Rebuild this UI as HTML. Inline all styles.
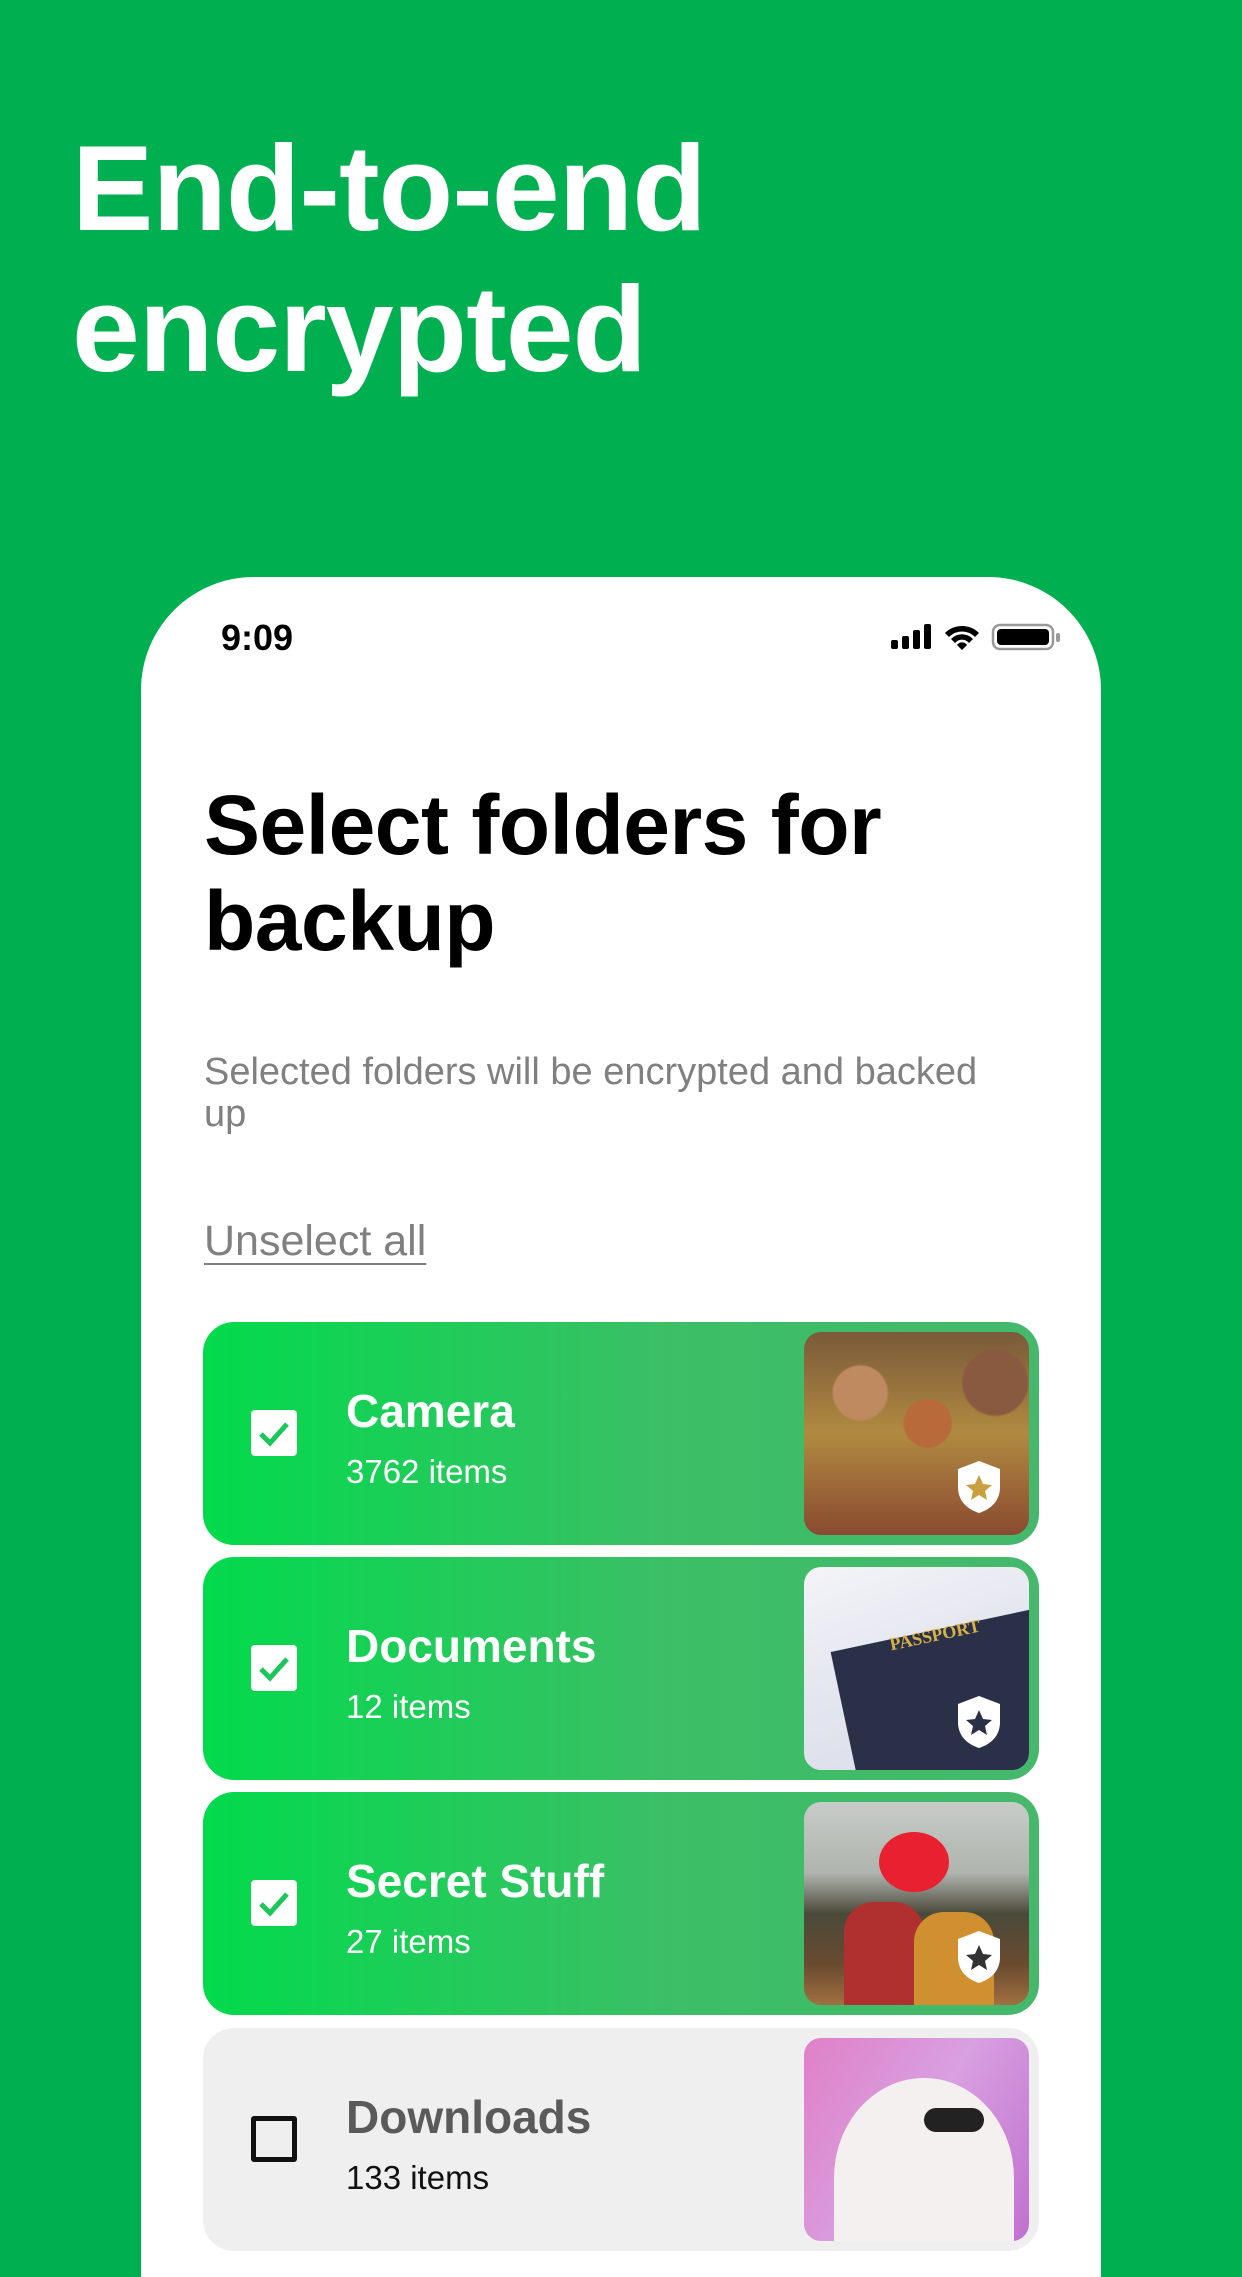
<!DOCTYPE html>
<html><head><meta charset="utf-8">
<style>
*{margin:0;padding:0;box-sizing:border-box}
body{width:1242px;height:2208px;overflow:hidden;background:#00B050;font-family:"Liberation Sans",sans-serif;position:relative}
.h1{position:absolute;left:72px;top:118px;color:#fff;font-size:122px;font-weight:700;line-height:141px;letter-spacing:-1px}
.phone{position:absolute;left:141px;top:577px;width:960px;height:1700px;background:#fff;border-radius:113px 113px 0 0}
.time{position:absolute;left:80px;top:40px;font-size:36px;font-weight:700;color:#000}
.title{position:absolute;left:63px;top:200px;font-size:84px;font-weight:700;line-height:96px;color:#000;letter-spacing:-0.5px}
.sub{position:absolute;left:63px;top:474px;font-size:38px;line-height:42px;color:#808080;width:820px}
.uns{position:absolute;left:63px;top:640px;font-size:43px;color:#808080;text-decoration:underline;text-underline-offset:8px;text-decoration-thickness:2px}
.card{position:absolute;left:62px;width:836px;height:223px;border-radius:31px;background:linear-gradient(90deg,#02DA4C 0%,#3BBF66 55%,#45B86C 100%)}
.card.off{background:#EFEFEF}
.cb{position:absolute;left:48px;top:88px;width:46px;height:46px;background:#fff;border-radius:4px}
.off .cb{background:none;border:5px solid #111;border-radius:3px}
.name{position:absolute;left:143px;top:62px;font-size:46px;font-weight:700;color:#fff}
.cnt{position:absolute;left:143px;top:131px;font-size:33px;color:#fff}
.off .name{color:#5a5a5a}.off .cnt{color:#111}
.img{position:absolute;left:601px;top:10px;width:225px;height:203px;border-radius:17px;overflow:hidden}
.sh{position:absolute;right:26px;bottom:20px;width:48px;height:56px}
</style></head><body>
<div class="h1">End-to-end<br>encrypted</div>
<div class="phone">
 <div class="time">9:09</div>
 <svg style="position:absolute;left:750px;top:45px" width="175" height="30" viewBox="0 0 175 30">
  <rect x="0" y="18" width="7" height="9" rx="2"/><rect x="11" y="14" width="7" height="13" rx="2"/><rect x="22" y="8" width="7" height="19" rx="2"/><rect x="33" y="2" width="7" height="25" rx="2"/>
  <path d="M54 11a24 24 0 0 1 34 0l-4 4a18 18 0 0 0-26 0z M60 17a15 15 0 0 1 22 0l-4 4a9 9 0 0 0-14 0z M66 23a6 6 0 0 1 10 0l-5 5z"/>
  <rect x="102" y="3" width="60" height="24" rx="7" fill="none" stroke="#999" stroke-width="2.5"/><rect x="106" y="7" width="52" height="16" rx="4"/><rect x="165" y="11" width="4" height="9" rx="2" fill="#999"/>
 </svg>
 <div class="title">Select folders for<br>backup</div>
 <div class="sub">Selected folders will be encrypted and backed up</div>
 <div class="uns">Unselect all</div>

 <div class="card" style="top:745px">
  <div class="cb"><svg width="46" height="46"><path d="M10 24l9 9 17-19" fill="none" stroke="#1BC65A" stroke-width="5"/></svg></div>
  <div class="name">Camera</div><div class="cnt">3762 items</div>
  <div class="img" style="background:radial-gradient(circle at 25% 30%,#c08a60 0 12%,transparent 13%),radial-gradient(circle at 55% 45%,#b86a3a 0 14%,transparent 15%),radial-gradient(circle at 85% 25%,#8a5a40 0 13%,transparent 14%),linear-gradient(180deg,#7a5a3a 0%,#b08a40 50%,#8a4a30 100%)">
   <svg class="sh" viewBox="0 0 48 56"><path d="M24 2L45 10v18c0 14-9 22-21 26C12 50 3 42 3 28V10z" fill="#fff"/><path d="M24 16l4 9 9 1-7 6 2 9-8-5-8 5 2-9-7-6 9-1z" fill="#c8a040"/></svg>
  </div>
 </div>
 <div class="card" style="top:980px">
  <div class="cb"><svg width="46" height="46"><path d="M10 24l9 9 17-19" fill="none" stroke="#1BC65A" stroke-width="5"/></svg></div>
  <div class="name">Documents</div><div class="cnt">12 items</div>
  <div class="img" style="background:linear-gradient(160deg,#f4f4f8 0%,#e6e8f0 40%,#d8dce8 100%)">
   <div style="position:absolute;left:45px;top:60px;width:220px;height:200px;background:#2a3048;transform:rotate(-12deg)"></div>
   <div style="position:absolute;left:85px;top:58px;font:700 18px 'Liberation Serif',serif;color:#d8b048;transform:rotate(-12deg)">PASSPORT</div>
   <svg class="sh" viewBox="0 0 48 56"><path d="M24 2L45 10v18c0 14-9 22-21 26C12 50 3 42 3 28V10z" fill="#fff"/><path d="M24 16l4 9 9 1-7 6 2 9-8-5-8 5 2-9-7-6 9-1z" fill="#2a3048"/></svg>
  </div>
 </div>
 <div class="card" style="top:1215px">
  <div class="cb"><svg width="46" height="46"><path d="M10 24l9 9 17-19" fill="none" stroke="#1BC65A" stroke-width="5"/></svg></div>
  <div class="name">Secret Stuff</div><div class="cnt">27 items</div>
  <div class="img" style="background:linear-gradient(180deg,#c8ccc8 0%,#b0b4ae 35%,#4a4a3a 55%,#6a4a30 80%,#a07040 100%)">
   <div style="position:absolute;left:40px;top:100px;width:80px;height:110px;background:#b03030;border-radius:30px 30px 0 0"></div>
   <div style="position:absolute;left:110px;top:110px;width:80px;height:100px;background:#d09030;border-radius:30px 30px 0 0"></div>
   <div style="position:absolute;left:75px;top:30px;width:70px;height:60px;background:#e82030;border-radius:50%"></div>
   <svg class="sh" viewBox="0 0 48 56"><path d="M24 2L45 10v18c0 14-9 22-21 26C12 50 3 42 3 28V10z" fill="#fff"/><path d="M24 16l4 9 9 1-7 6 2 9-8-5-8 5 2-9-7-6 9-1z" fill="#333"/></svg>
  </div>
 </div>
 <div class="card off" style="top:1451px">
  <div class="cb"></div>
  <div class="name">Downloads</div><div class="cnt">133 items</div>
  <div class="img" style="background:linear-gradient(120deg,#e080c8 0%,#d8a0e0 50%,#c070d0 100%)">
   <div style="position:absolute;left:30px;top:40px;width:180px;height:200px;background:#f4f0f0;border-radius:50% 50% 0 0"></div>
   <div style="position:absolute;left:120px;top:70px;width:60px;height:24px;background:#222;border-radius:12px"></div>
  </div>
 </div>
</div>
</body></html>
